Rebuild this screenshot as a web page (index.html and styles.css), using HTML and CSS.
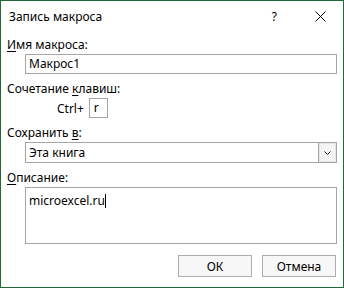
FILE: index.html
```html
<!DOCTYPE html>
<html lang="ru">
<head>
    <meta charset="UTF-8">
    <title>Запись макроса</title>
    <link rel="stylesheet" href="styles.css">
</head>
<body>
    <div class="dialog">
        <div class="titlebar">
            <span class="title">Запись макроса</span>
            <span class="help">?</span>
            <svg class="close" width="11" height="11" viewBox="0 0 11 11">
                <path d="M0.5 0.5 L10.5 10.5 M10.5 0.5 L0.5 10.5" stroke="#000" stroke-width="1" fill="none"/>
            </svg>
        </div>

        <div class="label label-first"><u>И</u>мя макроса:</div>
        <div class="field">Макрос1</div>

        <div class="label">Сочетание <u>к</u>лавиш:</div>
        <div class="hotkey">
            <span>Ctrl+</span>
            <div class="keybox">r</div>
        </div>

        <div class="label">Сохранить <u>в</u>:</div>
        <div class="field select">
            <span>Эта книга</span>
            <div class="drop">
                <svg width="7" height="4" viewBox="0 0 7 4">
                    <path d="M0.5 0.5 L3.5 3.5 L6.5 0.5" stroke="#1f1f3a" stroke-width="1" fill="none"/>
                </svg>
            </div>
        </div>

        <div class="label"><u>О</u>писание:</div>
        <div class="field memo">microexcel.ru<span class="caret"></span></div>

        <div class="buttons">
            <button>ОК</button>
            <button>Отмена</button>
        </div>
    </div>
</body>
</html>
```

FILE: styles.css
```css
* { margin: 0; padding: 0; box-sizing: border-box; }
body {
    font-family: "Noto Sans", "Open Sans", sans-serif;
    font-size: 12px;
    color: #000;
    background: #fff;
}
.dialog {
    width: 344px;
    height: 288px;
    border: 1px solid #1d6a35;
    padding: 0 6px 0 6px;
    background: #fff;
}
.titlebar {
    display: flex;
    align-items: center;
    height: 30px;
    padding-left: 2px;
    padding-top: 1px;
}
.title { flex: 1; font-size: 12px; line-height: 15px; }
.help { margin-right: 38px; font-size: 12px; }
.close { margin-right: 11px; }
.label { line-height: 15px; height: 15px; margin-top: 7px; }
.label-first { margin-top: 6px; }
.label u { text-underline-offset: 2px; }
.field {
    margin: 2px 0 0 18px;
    height: 20px;
    border: 1px solid #a6a6a6;
    padding: 1px 3px;
    line-height: 16px;
}
.hotkey {
    display: flex;
    align-items: center;
    margin: 2px 0 0 50px;
    height: 20px;
}
.keybox {
    width: 19px;
    height: 20px;
    margin-left: 5px;
    border: 1px solid #a6a6a6;
    padding: 1px 4px;
    line-height: 16px;
}
.select {
    display: flex;
    height: 21px;
    padding: 0 0 0 3px;
    line-height: 19px;
}
.select span { flex: 1; }
.drop {
    width: 18px;
    border-left: 1px solid #a6a6a6;
    background: #f4f4f4;
    display: flex;
    align-items: center;
    justify-content: center;
    box-shadow: inset 0 0 0 1px #e6e6e6;
}
.memo { height: 57px; margin-top: 2px; padding-top: 5px; }
.caret {
    display: inline-block;
    width: 1px;
    height: 14px;
    background: #000;
    vertical-align: -3px;
}
.buttons {
    display: flex;
    justify-content: flex-end;
    gap: 10px;
    margin-top: 11px;
    padding-right: 1px;
}
button {
    width: 74px;
    height: 22px;
    border: 1px solid #adadad;
    background: #f7f7f7;
    font-family: inherit;
    font-size: 12px;
    color: #000;
}
```
